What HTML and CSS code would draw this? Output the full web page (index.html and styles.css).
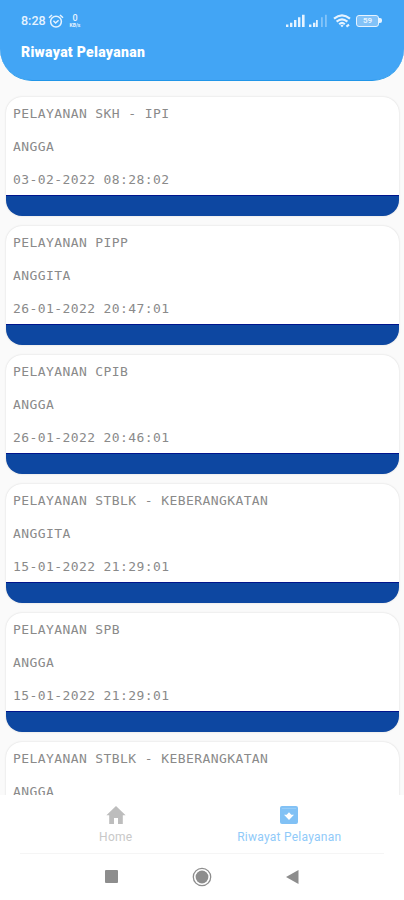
FILE: index.html
```html
<!DOCTYPE html>
<html lang="id">

<head>
    <meta charset="UTF-8">
    <meta name="viewport" content="width=device-width, initial-scale=1.0">
    <title>Riwayat Pelayanan</title>
    <link rel="stylesheet" href="styles.css">
</head>

<body>

    <div class="container">
        <header class="header">
            <div class="status">
                <div class="status-left">
                    <span class="time">8:28</span>
                    <svg class="alarm" width="16" height="14" viewBox="0 0 16 14" fill="none" stroke="#e6f3ff" stroke-width="1.5">
                        <circle cx="8" cy="7.6" r="5.4" />
                        <path d="M1 3.8L4 1M15 3.8L12 1M5.4 6.8L7.6 9L10.6 6.2" />
                    </svg>
                    <span class="speed"><b>0</b><i>KB/s</i></span>
                </div>
                <div class="status-right">
                    <svg width="20" height="13" viewBox="0 0 20 13" fill="#e6f3ff">
                        <path d="M0 10.5h2.4V13H0zM4 8.8h2.4V13H4zM8 6h2.4v7H8zM12 3.2h2.4V13H12zM16 .8h2.6V13H16z" />
                    </svg>
                    <svg width="19" height="13" viewBox="0 0 19 13" fill="#e6f3ff">
                        <path d="M0 10.5h2.4V13H0zM4 8.8h2.4V13H4z" />
                        <path d="M7 6h1.8v7H7z" />
                        <path opacity=".4" d="M12 3.2h1.8V13H12zM16 .8h1.8V13H16z" />
                    </svg>
                    <svg class="wifi" width="18" height="14" viewBox="0 0 18 14" fill="none" stroke="#e6f3ff" stroke-width="2.1">
                        <path d="M1 4.6Q9-2 17 4.6M3.6 7.6Q9 3 14.4 7.6M6.2 10.3Q9 7.6 11.8 10.3" />
                        <path d="M9 10.4l1.6 1.4L9 13.2l-1.6-1.4z" fill="#e6f3ff" stroke="none" />
                        <path d="M13.4 12.6l2.6-2" />
                    </svg>
                    <span class="battery"><span>59</span></span>
                </div>
            </div>
            <h1>Riwayat Pelayanan</h1>
        </header>

        <main class="list">
            <div class="card">
                <p>PELAYANAN SKH - IPI</p>
                <p>ANGGA</p>
                <p>03-02-2022 08:28:02</p>
            </div>
            <div class="card">
                <p>PELAYANAN PIPP</p>
                <p>ANGGITA</p>
                <p>26-01-2022 20:47:01</p>
            </div>
            <div class="card">
                <p>PELAYANAN CPIB</p>
                <p>ANGGA</p>
                <p>26-01-2022 20:46:01</p>
            </div>
            <div class="card">
                <p>PELAYANAN STBLK - KEBERANGKATAN</p>
                <p>ANGGITA</p>
                <p>15-01-2022 21:29:01</p>
            </div>
            <div class="card">
                <p>PELAYANAN SPB</p>
                <p>ANGGA</p>
                <p>15-01-2022 21:29:01</p>
            </div>
            <div class="card">
                <p>PELAYANAN STBLK - KEBERANGKATAN</p>
                <p>ANGGA</p>
            </div>
        </main>

        <nav class="tabs">
            <a href="#" class="tab">
                <svg width="20" height="18" viewBox="0 0 20 18" fill="#bdbdbd">
                    <path d="M10 0L.4 9.2h2.8V18H8v-6h4v6h4.8V9.2h2.8z" />
                </svg>
                <span>Home</span>
            </a>
            <a href="#" class="tab on">
                <svg width="18" height="18" viewBox="0 0 18 18">
                    <rect width="18" height="18" rx="2" fill="#81c1f5" />
                    <path d="M1.8 2.4h14.4" stroke="#9bcef8" stroke-width="1" />
                    <path d="M9 6.3l2.3 2.5H14L9 14.1 4 8.8h2.7z" fill="#fff" />
                </svg>
                <span>Riwayat Pelayanan</span>
            </a>
        </nav>

        <footer class="system">
            <svg width="13" height="13" viewBox="0 0 13 13"><rect width="13" height="13" rx="1" fill="#8d8d8d" /></svg>
            <svg width="20" height="20" viewBox="0 0 20 20">
                <circle cx="10" cy="10" r="8.7" fill="none" stroke="#8d8d8d" stroke-width="1.3" />
                <circle cx="10" cy="10" r="6.4" fill="#8d8d8d" />
            </svg>
            <svg width="13" height="14" viewBox="0 0 13 14"><path d="M12.5 0v14L0 7z" fill="#8d8d8d" /></svg>
        </footer>
    </div>

</body>

</html>
```
FILE: styles.css
```css
/* css reset START */
* {
    margin: 0;
    padding: 0;
    box-sizing: border-box;
}

a {
    text-decoration: none;
}

svg {
    display: block;
    flex-shrink: 0;
}

/* css reset END */

/* container START */
.container {
    width: 404px;
    height: 900px;
    display: flex;
    flex-direction: column;
    overflow: hidden;
    background-color: #fafafa;
    font-family: Roboto, "Liberation Sans", sans-serif;
}

/* container END */

/* header START */
.header {
    height: 81px;
    flex-shrink: 0;
    padding: 13px 22px 0 21px;
    color: #ffffff;
    background-color: #42a5f5;
    border-bottom: 1px solid #2196e8;
    border-radius: 0 0 32px 32px;
}

.header h1 {
    margin-top: 15px;
    font-size: 14px;
    line-height: 18px;
    font-weight: 900;
    letter-spacing: 0.3px;
}

.status {
    height: 15px;
    display: flex;
    justify-content: space-between;
    align-items: center;
    color: #e6f3ff;
}

.status-left {
    display: flex;
    align-items: center;
}

.time {
    width: 26px;
    font-size: 12.5px;
    line-height: 15px;
    font-weight: 500;
    white-space: nowrap;
}

.alarm {
    margin-left: 1px;
}

.speed {
    width: 14px;
    margin-left: 4px;
    text-align: center;
}

.speed b,
.speed i {
    display: block;
    font-style: normal;
}

.speed b {
    font-size: 9px;
    line-height: 9px;
    font-weight: 500;
}

.speed i {
    font-size: 5px;
    line-height: 5px;
    font-weight: 700;
}

.status-right {
    display: flex;
    align-items: center;
    gap: 3px;
}

.wifi {
    margin-left: 2px;
}

.battery {
    display: flex;
    align-items: center;
    margin-left: 2px;
}

.battery span {
    width: 23px;
    height: 12px;
    border: 1.5px solid #e6f3ff;
    border-radius: 3px;
    background-color: #82c2f8;
    font-size: 8px;
    line-height: 10px;
    font-weight: 700;
    text-align: center;
}

.battery::after {
    content: "";
    width: 3px;
    height: 5px;
    background-color: #e6f3ff;
    border-radius: 0 2px 2px 0;
}

/* header END */

/* list START */
.list {
    height: 714px;
    flex-shrink: 0;
    padding: 16px 5px 0 6px;
    overflow: hidden;
}

.card {
    height: 118.5px;
    margin-bottom: 10.5px;
    padding: 1.4px 7px 0;
    overflow: hidden;
    background-color: #ffffff;
    border-bottom: 20px solid #0d47a1;
    border-radius: 16px;
    box-shadow: 0 0 2px rgba(0, 0, 0, 0.16);
    background-image: linear-gradient(#00158c, #00158c);
    background-size: 100% 1px;
    background-position: bottom;
    background-repeat: no-repeat;
}

.card p {
    height: 32.6px;
    line-height: 32.6px;
    font-family: "DejaVu Sans Mono", "Liberation Mono", monospace;
    font-size: 13px;
    letter-spacing: 0.41px;
    color: #8a8a8a;
    white-space: nowrap;
}

/* list END */

/* tabs START */
.tabs {
    height: 58px;
    flex-shrink: 0;
    padding: 0 28px 0 29px;
    display: flex;
    background-color: #ffffff;
}

.tab {
    flex: 1;
    padding-top: 11px;
    display: flex;
    flex-direction: column;
    align-items: center;
    color: #c8c8c8;
}

.tab span {
    margin-top: 6px;
    font-size: 12px;
    line-height: 15px;
    letter-spacing: 0.25px;
}

.tab.on {
    color: #90caf9;
}

/* tabs END */

/* system START */
.system {
    height: 47px;
    padding: 0 105px;
    display: flex;
    justify-content: space-between;
    align-items: center;
    background: linear-gradient(#f5f5f5, #f5f5f5) center top / 364px 1px no-repeat #ffffff;
}

/* system END */
```
